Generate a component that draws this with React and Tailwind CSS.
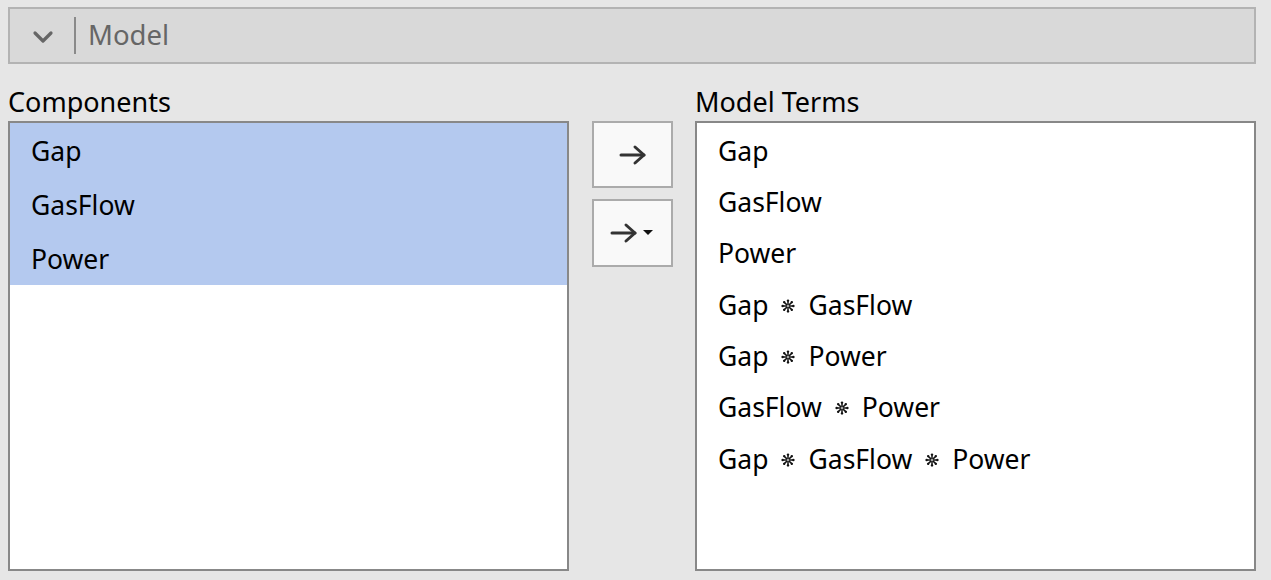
import { useState } from 'react'

const components = ['Gap', 'GasFlow', 'Power']
const terms = [
  ['Gap'],
  ['GasFlow'],
  ['Power'],
  ['Gap', 'GasFlow'],
  ['Gap', 'Power'],
  ['GasFlow', 'Power'],
  ['Gap', 'GasFlow', 'Power'],
]

const Chevron = () => (
  <svg width="22" height="14" viewBox="0 0 22 14" fill="none">
    <polyline points="3,3 11,11 19,3" stroke="#666" strokeWidth="3.2" strokeLinecap="round" strokeLinejoin="round" />
  </svg>
)

const Arrow = () => (
  <svg width="28" height="22" viewBox="0 0 28 22" fill="none">
    <line x1="2" y1="11" x2="25" y2="11" stroke="#333" strokeWidth="3" strokeLinecap="round" />
    <polyline points="16,3 25,11 16,19" stroke="#333" strokeWidth="3" strokeLinecap="round" strokeLinejoin="round" />
  </svg>
)

// interaction mark between term parts
const Star = () => (
  <svg width="14" height="14" viewBox="-7 -7 14 14" className="inline-block mx-[13px] relative top-[-2px]">
    {[0, 45, 90, 135, 180, 225, 270, 315].map((a) => (
      <g key={a} transform={`rotate(${a})`}>
        <line x1="0" y1="-1.6" x2="0" y2="-5" stroke="#111" strokeWidth="1.5" strokeLinecap="round" />
        <circle cx="0" cy="-5.4" r="1.2" fill="#111" />
      </g>
    ))}
  </svg>
)

const Term = ({ parts }) => (
  <span className="whitespace-nowrap">
    {parts.map((p, i) => (
      <span key={i}>
        {i > 0 && <Star />}
        {p}
      </span>
    ))}
  </span>
)

export default function App() {
  const [selected] = useState([0, 1, 2])

  return (
    <div className="w-[1271px] h-[580px] bg-[#e6e6e6] pt-[7px] pl-[8px] font-['Noto_Sans',sans-serif] text-black overflow-hidden">
      {/* Collapsible header */}
      <div className="w-[1248px] h-[57px] border-2 border-[#b3b3b3] bg-[#d9d9d9] flex items-center">
        <div className="ml-[22px] mt-[2px]">
          <Chevron />
        </div>
        <div className="ml-[20px] w-[2px] h-[37px] bg-[#8a8a8a]" />
        <span className="ml-[12px] text-[27.5px] leading-none text-[#666] mb-[1px]">Model</span>
      </div>

      <div className="flex">
        {/* Components */}
        <div className="w-[561px]">
          <div className="h-[57px] flex items-end pb-[6px] text-[27px] leading-none">Components</div>
          <div className="h-[450px] border-2 border-[#888] bg-white">
            {components.map((c, i) => (
              <div
                key={c}
                className={`h-[54px] flex items-center pl-[21px] pt-[4px] text-[26.5px] ${selected.includes(i) ? 'bg-[#b4c9ef]' : ''}`}
              >
                {c}
              </div>
            ))}
          </div>
        </div>

        {/* Buttons */}
        <div className="ml-[23px] w-[81px] pt-[57px] flex flex-col gap-[11px]">
          <div className="h-[67px] border-2 border-[#ababab] bg-[#f9f9f9] flex items-center justify-center">
            <Arrow />
          </div>
          <div className="h-[68px] border-2 border-[#ababab] bg-[#f9f9f9] flex items-center justify-center gap-[5px] pr-[2px]">
            <Arrow />
            <svg width="10" height="6" viewBox="0 0 10 6">
              <polygon points="0,0 10,0 5,5" fill="#111" />
            </svg>
          </div>
        </div>

        {/* Model Terms */}
        <div className="ml-[22px] w-[561px]">
          <div className="h-[57px] flex items-end pb-[6px] text-[27px] leading-none">Model Terms</div>
          <div className="h-[450px] border-2 border-[#888] bg-white pt-[3px]">
            {terms.map((t, i) => (
              <div key={i} className="h-[51.33px] flex items-center pl-[21px] text-[26.5px]">
                <Term parts={t} />
              </div>
            ))}
          </div>
        </div>
      </div>
    </div>
  )
}
